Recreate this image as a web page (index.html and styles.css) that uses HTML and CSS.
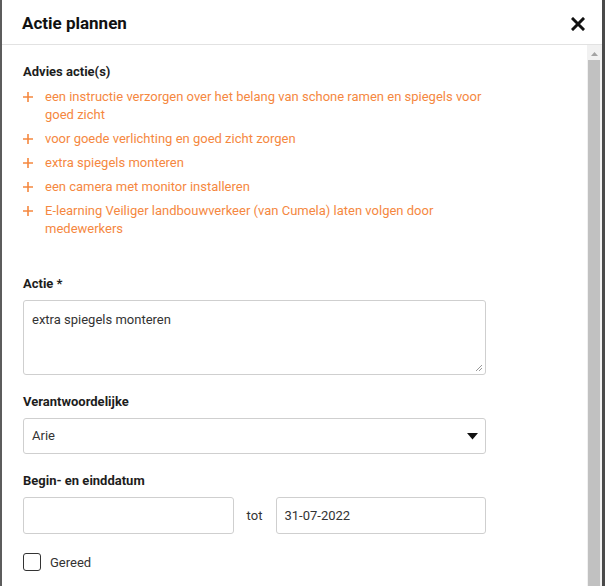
FILE: index.html
```html
<!DOCTYPE html>
<html lang="nl">
<head>
<meta charset="utf-8">
<title>Actie plannen</title>
<link rel="stylesheet" href="styles.css">
</head>
<body>
<div class="frame">
  <div class="dialog">
    <header class="dialog-header">
      <h1 class="dialog-title">Actie plannen</h1>
      <button class="close-btn" aria-label="Sluiten">
        <svg width="14" height="14" viewBox="0 0 14 14"><path d="M2 2 L12 12 M12 2 L2 12" stroke="#111" stroke-width="3" stroke-linecap="square"/></svg>
      </button>
    </header>
    <div class="dialog-main">
      <div class="content">
        <div class="form">
          <div class="label">Advies actie(s)</div>
          <ul class="advice-list">
            <li class="advice"><span class="plus"><svg width="10" height="10" viewBox="0 0 10 10"><path d="M5 0 V10 M0 5 H10" stroke="#f5883f" stroke-width="1.6"/></svg></span><span class="advice-text">een instructie verzorgen over het belang van schone ramen en spiegels voor goed zicht</span></li>
            <li class="advice"><span class="plus"><svg width="10" height="10" viewBox="0 0 10 10"><path d="M5 0 V10 M0 5 H10" stroke="#f5883f" stroke-width="1.6"/></svg></span><span class="advice-text">voor goede verlichting en goed zicht zorgen</span></li>
            <li class="advice"><span class="plus"><svg width="10" height="10" viewBox="0 0 10 10"><path d="M5 0 V10 M0 5 H10" stroke="#f5883f" stroke-width="1.6"/></svg></span><span class="advice-text">extra spiegels monteren</span></li>
            <li class="advice"><span class="plus"><svg width="10" height="10" viewBox="0 0 10 10"><path d="M5 0 V10 M0 5 H10" stroke="#f5883f" stroke-width="1.6"/></svg></span><span class="advice-text">een camera met monitor installeren</span></li>
            <li class="advice"><span class="plus"><svg width="10" height="10" viewBox="0 0 10 10"><path d="M5 0 V10 M0 5 H10" stroke="#f5883f" stroke-width="1.6"/></svg></span><span class="advice-text">E-learning Veiliger landbouwverkeer (van Cumela) laten volgen door medewerkers</span></li>
          </ul>

          <div class="label field-label first-field">Actie *</div>
          <div class="textarea">
            <span class="input-text">extra spiegels monteren</span>
            <svg class="resize" width="8" height="8" viewBox="0 0 8 8"><path d="M7 1 L1 7 M7 4 L4 7" stroke="#999" stroke-width="1"/></svg>
          </div>

          <div class="label field-label">Verantwoordelijke</div>
          <div class="select">
            <span class="input-text">Arie</span>
            <svg width="11" height="7" viewBox="0 0 11 7"><path d="M0 0 H11 L5.5 6.5 Z" fill="#111"/></svg>
          </div>

          <div class="label field-label">Begin- en einddatum</div>
          <div class="date-row">
            <div class="input"></div>
            <span class="tot">tot</span>
            <div class="input"><span class="input-text">31-07-2022</span></div>
          </div>

          <div class="check-row">
            <span class="checkbox"></span>
            <span class="check-label">Gereed</span>
          </div>
        </div>
      </div>
      <div class="scrollbar">
        <svg class="arrow" width="7" height="4" viewBox="0 0 7 4"><path d="M0 4 L3.5 0 L7 4 Z" fill="#a3a3a3"/></svg>
        <div class="thumb"></div>
      </div>
    </div>
  </div>
  <div class="edge"></div>
</div>
</body>
</html>
```

FILE: styles.css
```css
* { box-sizing: border-box; }
html, body { margin: 0; padding: 0; }
body {
  font-family: Roboto, "Liberation Sans", Arial, sans-serif;
  font-size: 13px;
  color: #222;
  background: #fff;
  overflow: hidden;
}
.frame {
  display: flex;
  height: 586px;
  width: 605px;
}
.dialog {
  flex: 1;
  display: flex;
  flex-direction: column;
  border-left: 2px solid #5c5c5c;
  background: #fff;
  min-width: 0;
}
.edge {
  width: 3px;
  background: #4a4a4a;
}
.dialog-header {
  height: 45px;
  flex: none;
  display: flex;
  align-items: center;
  justify-content: space-between;
  padding: 0 17px 0 20px;
  border-bottom: 1px solid #e2e2e2;
}
.dialog-title {
  margin: 0;
  font-size: 17px;
  font-weight: 700;
  color: #111;
  line-height: 20px;
  padding-top: 1px;
}
.close-btn {
  border: 0;
  background: none;
  padding: 0;
  width: 14px;
  height: 14px;
  display: flex;
  margin-top: 4px;
}
.dialog-main {
  flex: 1;
  display: flex;
  min-height: 0;
}
.content {
  flex: 1;
  padding: 18px 0 0 21px;
  overflow: hidden;
}
.form {
  width: 463px;
}
.label {
  font-weight: 700;
  color: #1d1d1d;
  line-height: 18px;
}
.advice-list {
  list-style: none;
  margin: 7px 0 0 0;
  padding: 0;
  display: flex;
  flex-direction: column;
  gap: 6px;
}
.advice {
  display: flex;
  line-height: 18px;
  color: #f5883f;
}
.plus {
  width: 22px;
  flex: none;
  display: flex;
  padding-top: 4px;
}
.advice-text { flex: 1; }
.field-label { margin: 18px 0 7px; }
.first-field { margin-top: 37px; }
.textarea {
  position: relative;
  height: 75px;
  border: 1px solid #cfcfcf;
  border-radius: 3px;
  padding: 10px 8px;
}
.input-text {
  color: #333;
  line-height: 18px;
}
.resize {
  position: absolute;
  right: 2px;
  bottom: 2px;
}
.select {
  height: 36px;
  border: 1px solid #cfcfcf;
  border-radius: 3px;
  padding: 0 7px 0 8px;
  display: flex;
  align-items: center;
  justify-content: space-between;
}
.date-row {
  display: flex;
  align-items: center;
  gap: 13px;
}
.input {
  flex: 1;
  height: 37px;
  border: 1px solid #cfcfcf;
  border-radius: 3px;
  padding: 0 8px;
  display: flex;
  align-items: center;
}
.tot {
  color: #333;
  width: 16px;
  text-align: center;
}
.check-row {
  display: flex;
  align-items: center;
  margin-top: 19px;
  gap: 9px;
}
.checkbox {
  width: 18px;
  height: 18px;
  border: 1.5px solid #333;
  border-radius: 3px;
  display: block;
}
.check-label { color: #333; }
.scrollbar {
  width: 15px;
  flex: none;
  background: #f1f1f1;
  display: flex;
  flex-direction: column;
  align-items: flex-start;
  padding: 0 2px 0 1px;
}
.arrow {
  margin: 7px 0 0 3px;
}
.thumb {
  margin-top: 4px;
  flex: 1;
  width: 12px;
  background: #c1c1c1;
}
```
